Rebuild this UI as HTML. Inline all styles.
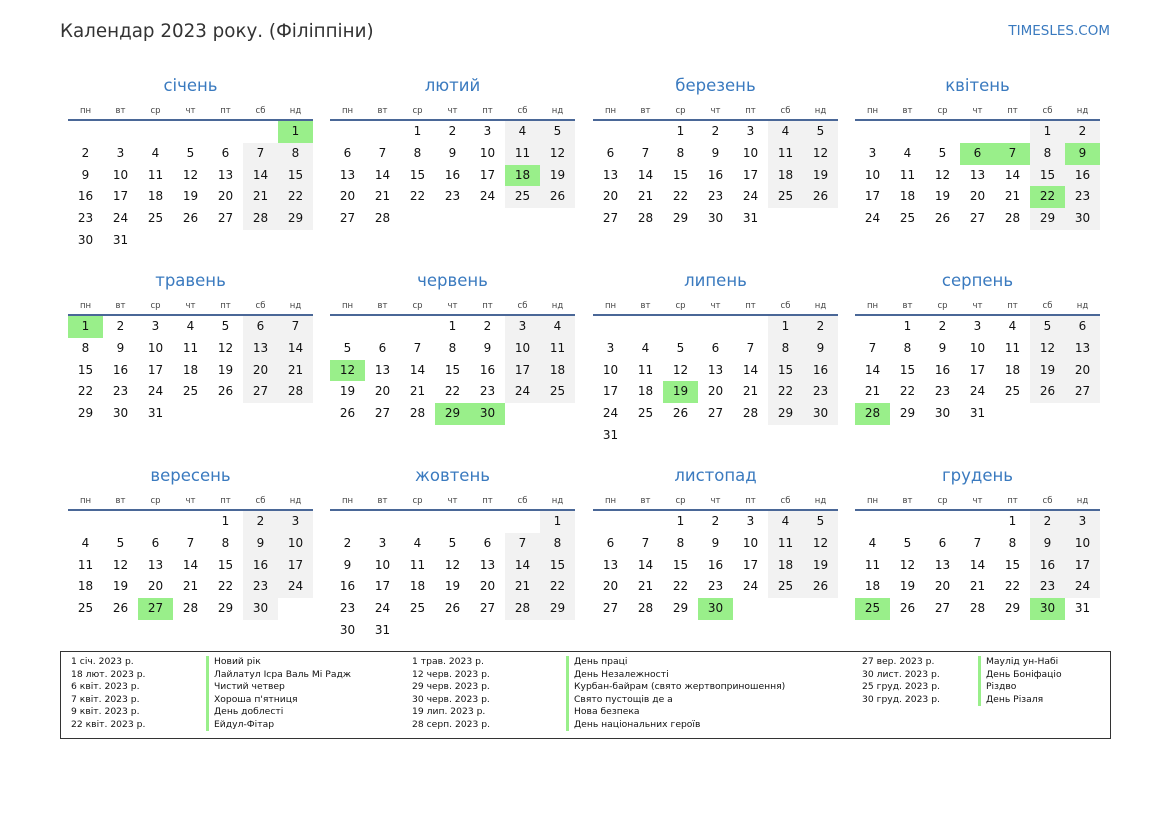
<!DOCTYPE html>
<html><head><meta charset="utf-8"><style>
*{margin:0;padding:0;box-sizing:border-box}
body{width:1169px;height:827px;background:#fff;font-family:"DejaVu Sans","Liberation Sans",sans-serif;position:relative;overflow:hidden;color:#111}
.t{position:absolute;left:60px;top:21px;font-size:18.3px;color:#333}
.s{position:absolute;right:59px;top:23px;font-size:13.5px;color:#3a7abf}
.m{position:absolute;width:245px}
.m h2{font-weight:normal;font-size:16.5px;color:#3a7abf;text-align:center;height:22px;line-height:22px;margin-top:-10px}
.hd{display:grid;grid-template-columns:repeat(7,35px);font-size:8.5px;color:#444;text-align:center;margin-top:8px;height:13px;line-height:13px}
.ln{height:2px;background:#4a6797;margin-top:1px}
.g{display:grid;grid-template-columns:repeat(7,35px);grid-auto-rows:21.8px;font-size:12px;text-align:center;line-height:21.8px}
.g b{font-weight:normal}
.g .w{background:#f2f2f2}
.g .h{background:#99ef8a}
.lg{position:absolute;left:60px;top:651px;width:1051px;height:88px;border:1.5px solid #333}
.c{position:absolute;top:4px;font-size:9.2px;line-height:12.5px;color:#111;white-space:nowrap}
.c.n div{border-left:3px solid #99ef8a;padding-left:5px}
</style></head><body>
<div class="t">Календар 2023 року. (Філіппіни)</div>
<div class="s">TIMESLES.COM</div>

<div class="m" style="left:68px;top:85px"><h2>січень</h2><div class="hd"><span>пн</span><span>вт</span><span>ср</span><span>чт</span><span>пт</span><span>сб</span><span>нд</span></div><div class="ln"></div><div class="g"><i></i><i></i><i></i><i></i><i></i><i></i><b class="h">1</b><b>2</b><b>3</b><b>4</b><b>5</b><b>6</b><b class="w">7</b><b class="w">8</b><b>9</b><b>10</b><b>11</b><b>12</b><b>13</b><b class="w">14</b><b class="w">15</b><b>16</b><b>17</b><b>18</b><b>19</b><b>20</b><b class="w">21</b><b class="w">22</b><b>23</b><b>24</b><b>25</b><b>26</b><b>27</b><b class="w">28</b><b class="w">29</b><b>30</b><b>31</b></div></div>

<div class="m" style="left:330px;top:85px"><h2>лютий</h2><div class="hd"><span>пн</span><span>вт</span><span>ср</span><span>чт</span><span>пт</span><span>сб</span><span>нд</span></div><div class="ln"></div><div class="g"><i></i><i></i><b>1</b><b>2</b><b>3</b><b class="w">4</b><b class="w">5</b><b>6</b><b>7</b><b>8</b><b>9</b><b>10</b><b class="w">11</b><b class="w">12</b><b>13</b><b>14</b><b>15</b><b>16</b><b>17</b><b class="h">18</b><b class="w">19</b><b>20</b><b>21</b><b>22</b><b>23</b><b>24</b><b class="w">25</b><b class="w">26</b><b>27</b><b>28</b></div></div>

<div class="m" style="left:593px;top:85px"><h2>березень</h2><div class="hd"><span>пн</span><span>вт</span><span>ср</span><span>чт</span><span>пт</span><span>сб</span><span>нд</span></div><div class="ln"></div><div class="g"><i></i><i></i><b>1</b><b>2</b><b>3</b><b class="w">4</b><b class="w">5</b><b>6</b><b>7</b><b>8</b><b>9</b><b>10</b><b class="w">11</b><b class="w">12</b><b>13</b><b>14</b><b>15</b><b>16</b><b>17</b><b class="w">18</b><b class="w">19</b><b>20</b><b>21</b><b>22</b><b>23</b><b>24</b><b class="w">25</b><b class="w">26</b><b>27</b><b>28</b><b>29</b><b>30</b><b>31</b></div></div>

<div class="m" style="left:855px;top:85px"><h2>квітень</h2><div class="hd"><span>пн</span><span>вт</span><span>ср</span><span>чт</span><span>пт</span><span>сб</span><span>нд</span></div><div class="ln"></div><div class="g"><i></i><i></i><i></i><i></i><i></i><b class="w">1</b><b class="w">2</b><b>3</b><b>4</b><b>5</b><b class="h">6</b><b class="h">7</b><b class="w">8</b><b class="h">9</b><b>10</b><b>11</b><b>12</b><b>13</b><b>14</b><b class="w">15</b><b class="w">16</b><b>17</b><b>18</b><b>19</b><b>20</b><b>21</b><b class="h">22</b><b class="w">23</b><b>24</b><b>25</b><b>26</b><b>27</b><b>28</b><b class="w">29</b><b class="w">30</b></div></div>

<div class="m" style="left:68px;top:280px"><h2>травень</h2><div class="hd"><span>пн</span><span>вт</span><span>ср</span><span>чт</span><span>пт</span><span>сб</span><span>нд</span></div><div class="ln"></div><div class="g"><b class="h">1</b><b>2</b><b>3</b><b>4</b><b>5</b><b class="w">6</b><b class="w">7</b><b>8</b><b>9</b><b>10</b><b>11</b><b>12</b><b class="w">13</b><b class="w">14</b><b>15</b><b>16</b><b>17</b><b>18</b><b>19</b><b class="w">20</b><b class="w">21</b><b>22</b><b>23</b><b>24</b><b>25</b><b>26</b><b class="w">27</b><b class="w">28</b><b>29</b><b>30</b><b>31</b></div></div>

<div class="m" style="left:330px;top:280px"><h2>червень</h2><div class="hd"><span>пн</span><span>вт</span><span>ср</span><span>чт</span><span>пт</span><span>сб</span><span>нд</span></div><div class="ln"></div><div class="g"><i></i><i></i><i></i><b>1</b><b>2</b><b class="w">3</b><b class="w">4</b><b>5</b><b>6</b><b>7</b><b>8</b><b>9</b><b class="w">10</b><b class="w">11</b><b class="h">12</b><b>13</b><b>14</b><b>15</b><b>16</b><b class="w">17</b><b class="w">18</b><b>19</b><b>20</b><b>21</b><b>22</b><b>23</b><b class="w">24</b><b class="w">25</b><b>26</b><b>27</b><b>28</b><b class="h">29</b><b class="h">30</b></div></div>

<div class="m" style="left:593px;top:280px"><h2>липень</h2><div class="hd"><span>пн</span><span>вт</span><span>ср</span><span>чт</span><span>пт</span><span>сб</span><span>нд</span></div><div class="ln"></div><div class="g"><i></i><i></i><i></i><i></i><i></i><b class="w">1</b><b class="w">2</b><b>3</b><b>4</b><b>5</b><b>6</b><b>7</b><b class="w">8</b><b class="w">9</b><b>10</b><b>11</b><b>12</b><b>13</b><b>14</b><b class="w">15</b><b class="w">16</b><b>17</b><b>18</b><b class="h">19</b><b>20</b><b>21</b><b class="w">22</b><b class="w">23</b><b>24</b><b>25</b><b>26</b><b>27</b><b>28</b><b class="w">29</b><b class="w">30</b><b>31</b></div></div>

<div class="m" style="left:855px;top:280px"><h2>серпень</h2><div class="hd"><span>пн</span><span>вт</span><span>ср</span><span>чт</span><span>пт</span><span>сб</span><span>нд</span></div><div class="ln"></div><div class="g"><i></i><b>1</b><b>2</b><b>3</b><b>4</b><b class="w">5</b><b class="w">6</b><b>7</b><b>8</b><b>9</b><b>10</b><b>11</b><b class="w">12</b><b class="w">13</b><b>14</b><b>15</b><b>16</b><b>17</b><b>18</b><b class="w">19</b><b class="w">20</b><b>21</b><b>22</b><b>23</b><b>24</b><b>25</b><b class="w">26</b><b class="w">27</b><b class="h">28</b><b>29</b><b>30</b><b>31</b></div></div>

<div class="m" style="left:68px;top:475px"><h2>вересень</h2><div class="hd"><span>пн</span><span>вт</span><span>ср</span><span>чт</span><span>пт</span><span>сб</span><span>нд</span></div><div class="ln"></div><div class="g"><i></i><i></i><i></i><i></i><b>1</b><b class="w">2</b><b class="w">3</b><b>4</b><b>5</b><b>6</b><b>7</b><b>8</b><b class="w">9</b><b class="w">10</b><b>11</b><b>12</b><b>13</b><b>14</b><b>15</b><b class="w">16</b><b class="w">17</b><b>18</b><b>19</b><b>20</b><b>21</b><b>22</b><b class="w">23</b><b class="w">24</b><b>25</b><b>26</b><b class="h">27</b><b>28</b><b>29</b><b class="w">30</b></div></div>

<div class="m" style="left:330px;top:475px"><h2>жовтень</h2><div class="hd"><span>пн</span><span>вт</span><span>ср</span><span>чт</span><span>пт</span><span>сб</span><span>нд</span></div><div class="ln"></div><div class="g"><i></i><i></i><i></i><i></i><i></i><i></i><b class="w">1</b><b>2</b><b>3</b><b>4</b><b>5</b><b>6</b><b class="w">7</b><b class="w">8</b><b>9</b><b>10</b><b>11</b><b>12</b><b>13</b><b class="w">14</b><b class="w">15</b><b>16</b><b>17</b><b>18</b><b>19</b><b>20</b><b class="w">21</b><b class="w">22</b><b>23</b><b>24</b><b>25</b><b>26</b><b>27</b><b class="w">28</b><b class="w">29</b><b>30</b><b>31</b></div></div>

<div class="m" style="left:593px;top:475px"><h2>листопад</h2><div class="hd"><span>пн</span><span>вт</span><span>ср</span><span>чт</span><span>пт</span><span>сб</span><span>нд</span></div><div class="ln"></div><div class="g"><i></i><i></i><b>1</b><b>2</b><b>3</b><b class="w">4</b><b class="w">5</b><b>6</b><b>7</b><b>8</b><b>9</b><b>10</b><b class="w">11</b><b class="w">12</b><b>13</b><b>14</b><b>15</b><b>16</b><b>17</b><b class="w">18</b><b class="w">19</b><b>20</b><b>21</b><b>22</b><b>23</b><b>24</b><b class="w">25</b><b class="w">26</b><b>27</b><b>28</b><b>29</b><b class="h">30</b></div></div>

<div class="m" style="left:855px;top:475px"><h2>грудень</h2><div class="hd"><span>пн</span><span>вт</span><span>ср</span><span>чт</span><span>пт</span><span>сб</span><span>нд</span></div><div class="ln"></div><div class="g"><i></i><i></i><i></i><i></i><b>1</b><b class="w">2</b><b class="w">3</b><b>4</b><b>5</b><b>6</b><b>7</b><b>8</b><b class="w">9</b><b class="w">10</b><b>11</b><b>12</b><b>13</b><b>14</b><b>15</b><b class="w">16</b><b class="w">17</b><b>18</b><b>19</b><b>20</b><b>21</b><b>22</b><b class="w">23</b><b class="w">24</b><b class="h">25</b><b>26</b><b>27</b><b>28</b><b>29</b><b class="h">30</b><b>31</b></div></div>

<div class="lg">
<div class="c" style="left:10px"><div>1 січ. 2023 р.</div><div>18 лют. 2023 р.</div><div>6 квіт. 2023 р.</div><div>7 квіт. 2023 р.</div><div>9 квіт. 2023 р.</div><div>22 квіт. 2023 р.</div></div>
<div class="c n" style="left:145px"><div>Новий рік</div><div>Лайлатул Ісра Валь Мі Радж</div><div>Чистий четвер</div><div>Хороша п'ятниця</div><div>День доблесті</div><div>Ейдул-Фітар</div></div>
<div class="c" style="left:351px"><div>1 трав. 2023 р.</div><div>12 черв. 2023 р.</div><div>29 черв. 2023 р.</div><div>30 черв. 2023 р.</div><div>19 лип. 2023 р.</div><div>28 серп. 2023 р.</div></div>
<div class="c n" style="left:505px"><div>День праці</div><div>День Незалежності</div><div>Курбан-байрам (свято жертвоприношення)</div><div>Свято пустощів де а</div><div>Нова безпека</div><div>День національних героїв</div></div>
<div class="c" style="left:801px"><div>27 вер. 2023 р.</div><div>30 лист. 2023 р.</div><div>25 груд. 2023 р.</div><div>30 груд. 2023 р.</div></div>
<div class="c n" style="left:917px"><div>Маулід ун-Набі</div><div>День Боніфаціо</div><div>Різдво</div><div>День Різаля</div></div>
</div>
</body></html>
